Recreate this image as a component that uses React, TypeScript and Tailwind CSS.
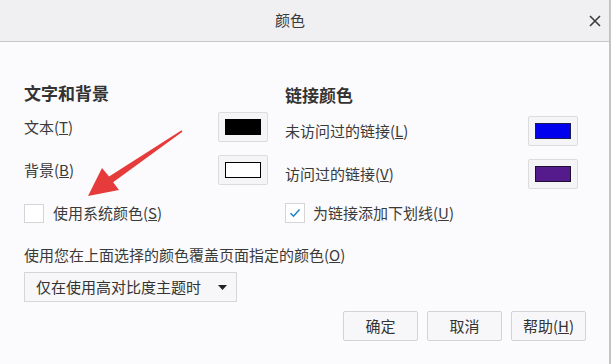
import React from 'react'

const font = "font-['Noto_Sans_CJK_SC',sans-serif]"

function Swatch({color, border = 'border-black'}: {color: string; border?: string}) {
  return (
    <div className="flex h-[30px] w-[50px] items-center justify-center rounded-[2px] border border-[#dcdcdc] bg-[#f5f5f7]">
      <div className={`h-[16px] w-[36px] border ${border}`} style={{backgroundColor: color}} />
    </div>
  )
}

function Label({text, hot}: {text: string; hot: string}) {
  return (
    <span className="text-[15px] leading-[20px] text-[#3a3a3a]">
      {text}(<u>{hot}</u>)
    </span>
  )
}

function Button({children}: {children: React.ReactNode}) {
  return (
    <button className="flex h-[30px] w-[75px] items-center justify-center rounded-[2px] border border-[#d3d3d3] bg-[#f7f7f9] text-[15px] text-[#333]">
      {children}
    </button>
  )
}

export default function App() {
  return (
    <div className={`relative h-[364px] w-[611px] overflow-hidden border-r-2 border-[#c4c4c4] bg-[#fbfafc] ${font}`}>
      <div className="flex h-[42px] items-center border-b border-[#c7c7c7] bg-[#f0eff1]">
        <span className="ml-[275px] text-[15px] text-[#3a3a3a]">颜色</span>
        <svg className="ml-auto mr-[8px]" width="12" height="12" viewBox="0 0 12 12">
          <path d="M1 1L11 11M11 1L1 11" stroke="#3c3c3c" strokeWidth="1.6" />
        </svg>
      </div>

      <div className="flex px-[24px] pt-[39px]">
        <div className="flex w-[244px] flex-col">
          <h2 className="text-[17px] font-bold leading-[24px] text-[#333]">文字和背景</h2>
          <div className="mt-[7px] flex h-[30px] items-center justify-between">
            <Label text="文本" hot="T" />
            <Swatch color="#000000" />
          </div>
          <div className="mt-[13px] flex h-[30px] items-center justify-between">
            <Label text="背景" hot="B" />
            <Swatch color="#ffffff" />
          </div>
          <div className="mt-[18px] flex items-center gap-[9px]">
            <div className="h-[19px] w-[20px] border border-[#d5d5d5] bg-white" />
            <Label text="使用系统颜色" hot="S" />
          </div>
        </div>

        <div className="ml-[17px] flex w-[293px] flex-col pt-[2px]">
          <h2 className="text-[17px] font-bold leading-[24px] text-[#333]">链接颜色</h2>
          <div className="mt-[9px] flex h-[30px] items-center justify-between">
            <Label text="未访问过的链接" hot="L" />
            <Swatch color="#0000ee" border="border-[#1a1a50]" />
          </div>
          <div className="mt-[13px] flex h-[30px] items-center justify-between">
            <Label text="访问过的链接" hot="V" />
            <Swatch color="#551a8b" border="border-[#1a1030]" />
          </div>
          <div className="mt-[14px] flex items-center gap-[8px]">
            <div className="flex h-[20px] w-[20px] items-center justify-center border border-[#d5d5d5] bg-white">
              <svg width="12" height="10" viewBox="0 0 12 10">
                <path d="M1.5 5.2L4.5 8.2L10.5 1.5" fill="none" stroke="#1f86c7" strokeWidth="1.6" />
              </svg>
            </div>
            <Label text="为链接添加下划线" hot="U" />
          </div>
        </div>
      </div>

      <div className="mt-[22px] px-[24px] leading-[20px]">
        <div className="flex h-[20px] items-center">
          <Label text="使用您在上面选择的颜色覆盖页面指定的颜色" hot="O" />
        </div>
        <div className="mt-[7px] flex h-[30px] w-[213px] items-center justify-between border border-[#d6d6d6] bg-[#f7f7f9] pl-[11px] pr-[9px]">
          <span className="text-[15px] text-[#333]">仅在使用高对比度主题时</span>
          <svg width="9" height="5" viewBox="0 0 9 5">
            <path d="M0 0H9L4.5 5Z" fill="#222" />
          </svg>
        </div>
      </div>

      <div className="mt-[9px] flex justify-end gap-[9px] pr-[23px]">
        <Button>确定</Button>
        <Button>取消</Button>
        <Button>
          帮助(<u>H</u>)
        </Button>
      </div>

      <svg className="pointer-events-none absolute left-0 top-0" width="611" height="364" viewBox="0 0 611 364">
        <polygon
          points="181.6,130.3 109.1,176.4 102,168 88,196 119,190 113.1,182.2 182.4,131.7"
          fill="#e63b3b"
        />
      </svg>
    </div>
  )
}
